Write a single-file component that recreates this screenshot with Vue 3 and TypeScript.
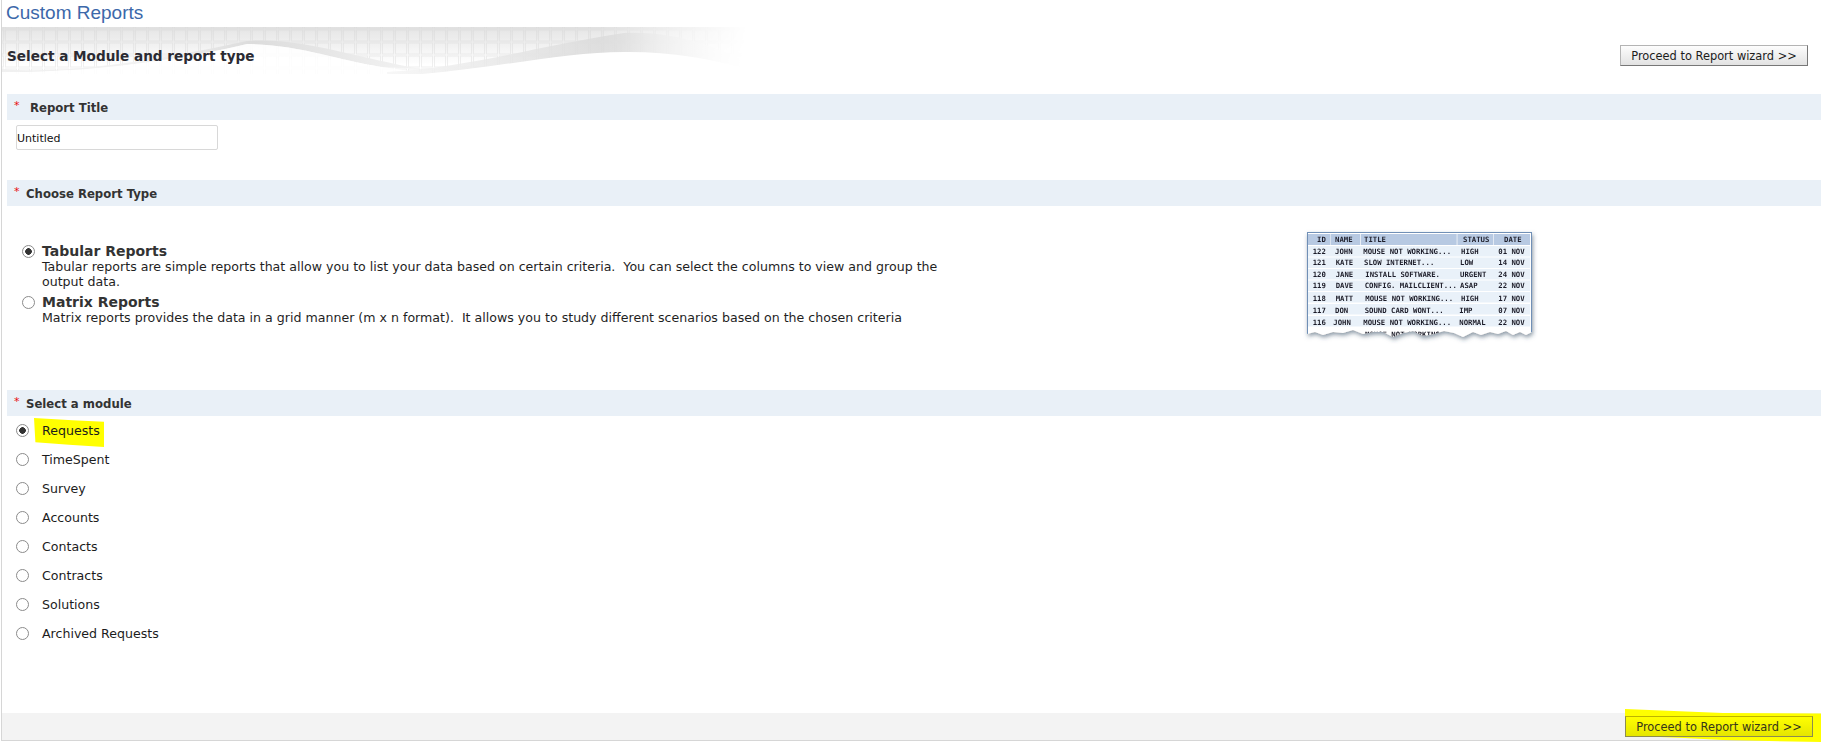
<script setup lang="ts">
import { ref } from 'vue'

interface ReportRow { cells: [string, number][] }

const modules = ['Requests', 'TimeSpent', 'Survey', 'Accounts', 'Contacts', 'Contracts', 'Solutions', 'Archived Requests']
const selectedModule = ref('Requests')
const reportType = ref('tabular')
const title = ref('Untitled')

const columns = [
  { x: 17, w: 22.5 }, { x: 40, w: 29 }, { x: 69.7, w: 96 }, { x: 166.4, w: 36 }, { x: 203, w: 36 }
]
const header: [string, number][] = [['ID', 26], ['NAME', 44], ['TITLE', 73], ['STATUS', 172], ['DATE', 213]]
const rows: ReportRow[] = [
  { cells: [['122', 21.7], ['JOHN', 44], ['MOUSE NOT WORKING...', 72.3], ['HIGH', 170], ['01 NOV', 207.3]] },
  { cells: [['121', 21.7], ['KATE', 44.7], ['SLOW INTERNET...', 73], ['LOW', 169], ['14 NOV', 207.3]] },
  { cells: [['120', 21.7], ['JANE', 44.7], ['INSTALL SOFTWARE.', 74.3], ['URGENT', 169], ['24 NOV', 207.3]] },
  { cells: [['119', 21.7], ['DAVE', 44.7], ['CONFIG. MAILCLIENT...', 73.7], ['ASAP', 169], ['22 NOV', 207.3]] },
  { cells: [['118', 21.7], ['MATT', 44.7], ['MOUSE NOT WORKING...', 74.3], ['HIGH', 170], ['17 NOV', 207.3]] },
  { cells: [['117', 21.7], ['DON', 44], ['SOUND CARD WONT...', 73.7], ['IMP', 168.3], ['07 NOV', 207.3]] },
  { cells: [['116', 21.7], ['JOHN', 42.3], ['MOUSE NOT WORKING...', 72.3], ['NORMAL', 168.3], ['22 NOV', 207.3]] }
]
const rowY = [22, 33.5, 45, 56.5, 69, 81, 93]
const torn = '16,8 241,8 241,108 235,111 229,108 222,111 215,107 207,110 199,108 190,111 182,108 172,113 163,109 153,107 143,110 132,112 122,107 112,109 102,113 92,108 82,108 72,110 62,106 52,109 42,108 32,111 24,108 16,110'
</script>

<template>
  <div class="page">
    <div class="frame">
      <h1 class="title">Custom Reports</h1>

      <div class="banner">
        <svg class="banner-art" width="745" height="47" viewBox="0 0 745 47" aria-hidden="true">
          <defs>
            <linearGradient id="topFade" x1="0" y1="0" x2="0" y2="1">
              <stop offset="0" stop-color="#e0e0e0" />
              <stop offset="0.8" stop-color="#ffffff" />
            </linearGradient>
            <linearGradient id="sideFade" x1="0" y1="0" x2="1" y2="0">
              <stop offset="0" stop-color="#fff" />
              <stop offset="0.8" stop-color="#fff" />
              <stop offset="1" stop-color="#000" />
            </linearGradient>
            <linearGradient id="waveLeft" x1="0" y1="0" x2="1" y2="0">
              <stop offset="0" stop-color="#f0f0f0" />
              <stop offset="0.35" stop-color="#f2f2f2" />
              <stop offset="0.6" stop-color="#dcdcdc" />
              <stop offset="1" stop-color="#f4f4f4" />
            </linearGradient>
            <linearGradient id="wave" x1="0" y1="0" x2="1" y2="0">
              <stop offset="0" stop-color="#f6f6f6" />
              <stop offset="0.65" stop-color="#d8d8d8" />
              <stop offset="1" stop-color="#f6f6f6" />
            </linearGradient>
            <pattern id="cells" width="13" height="13" patternUnits="userSpaceOnUse" x="3" y="2.5">
              <rect x="0.5" y="0.5" width="11" height="11" fill="#ffffff" fill-opacity="0.15" stroke="#d8d8d8" stroke-opacity="0.4" />
            </pattern>
            <mask id="bannerMask">
              <rect width="745" height="47" fill="url(#sideFade)" />
            </mask>
          </defs>
          <g mask="url(#bannerMask)">
            <rect width="745" height="47" fill="url(#topFade)" />
            <rect width="745" height="47" fill="url(#cells)" />
            <path d="M0 42 C70 48 160 32 245 14 C300 10 350 30 420 42 L380 40 C330 32 300 18 245 17 C160 37 70 46 0 45 Z" fill="url(#waveLeft)" />
            <path d="M0 45 C70 46 160 37 245 17 C300 18 330 32 380 40 L430 47 L0 47 Z" fill="#ffffff" fill-opacity="0.85" />
            <path d="M385 45 C470 40 530 20 622 6 C670 4 710 18 745 35 L745 47 L385 47 Z" fill="url(#wave)" fill-opacity="0.85" />
            <path d="M420 47 C500 40 570 24 627 25 C670 25 710 32 745 42 L745 47 Z" fill="#ffffff" />
          </g>
        </svg>
        <h2 class="banner-text">Select a Module and report type</h2>
        <button class="proceed" type="button">Proceed to Report wizard &gt;&gt;</button>
      </div>

      <div class="section-head first"><span class="req req-wide">*</span>Report Title</div>
      <div class="title-row">
        <input v-model="title" class="title-input" type="text" />
      </div>

      <div class="section-head"><span class="req">*</span>Choose Report Type</div>
      <div class="type-row">
        <div class="type-list">
          <label class="type-option">
            <input v-model="reportType" class="radio" type="radio" value="tabular" />
            <span>
              <span class="type-name">Tabular Reports</span>
              <span class="type-desc">Tabular reports are simple reports that allow you to list your data based on certain criteria.&nbsp; You can select the columns to view and group the output data.</span>
            </span>
          </label>
          <label class="type-option">
            <input v-model="reportType" class="radio" type="radio" value="matrix" />
            <span>
              <span class="type-name">Matrix Reports</span>
              <span class="type-desc">Matrix reports provides the data in a grid manner (m x n format).&nbsp; It allows you to study different scenarios based on the chosen criteria</span>
            </span>
          </label>
        </div>
        <svg class="sample" width="260" height="120" viewBox="0 0 260 120" role="img" aria-label="Sample tabular report">
          <defs>
            <clipPath id="tornEdge"><polygon :points="torn" /></clipPath>
            <filter id="sampleShadow" x="-10%" y="-10%" width="120%" height="125%">
              <feDropShadow dx="1" dy="2.5" stdDeviation="2" flood-color="#33475f" flood-opacity="0.55" />
            </filter>
          </defs>
          <g filter="url(#sampleShadow)">
            <g clip-path="url(#tornEdge)">
              <rect x="16" y="8" width="225" height="108" fill="#ffffff" />
              <rect x="16.5" y="8.5" width="224" height="110" fill="none" stroke="#6f8fb6" />
              <g v-for="c in columns" :key="c.x">
                <rect :x="c.x" y="10" :width="c.w" height="11" fill="#b7c9e2" />
              </g>
              <g v-for="y in [22, 33.5, 45, 56.5, 68, 80, 92]" :key="y">
                <rect x="17" :y="y" width="222" height="10.5" fill="#e9f1f9" />
              </g>
              <text v-for="h in header" :key="h[0]" :x="h[1]" y="18" class="px-text">{{ h[0] }}</text>
              <g v-for="(r, i) in rows" :key="i">
                <text v-for="c in r.cells" :key="c[0]" :x="c[1]" :y="rowY[i] + 7.5" class="px-text">{{ c[0] }}</text>
              </g>
              <text x="74" y="113" class="px-text">MOUSE NOT WORKING</text>
            </g>
          </g>
        </svg>
      </div>

      <div class="section-head"><span class="req">*</span>Select a module</div>
      <div class="module-list">
        <label v-for="m in modules" :key="m" class="module-row">
          <input v-model="selectedModule" class="radio" type="radio" :value="m" />
          <span class="module-name" :class="{ marked: m === 'Requests' }"><span class="module-label">{{ m }}</span></span>
        </label>
      </div>

      <div class="footer">
        <span class="marker-wrap">
          <button class="proceed proceed-marked" type="button">Proceed to Report wizard &gt;&gt;</button>
        </span>
      </div>
    </div>
  </div>
</template>

<style>
html, body { margin: 0; background: #fff; }
</style>

<style scoped>
.page {
  width: 1821px;
  height: 756px;
  overflow: hidden;
  font-family: "DejaVu Sans", Verdana, sans-serif;
  font-size: 12.6px;
  color: #1c1c1c;
}
.frame {
  box-sizing: border-box;
  width: 1820px;
  height: 741px;
  margin-left: 1px;
  border-left: 1px solid #d6d6d6;
  border-bottom: 1px solid #d6d6d6;
  display: flex;
  flex-direction: column;
}
.title {
  margin: 0;
  height: 27px;
  padding-left: 4px;
  font: 400 19px/25px "Liberation Sans", Arial, sans-serif;
  color: #3c68aa;
}
.banner {
  position: relative;
  height: 47px;
  display: flex;
  align-items: center;
  justify-content: space-between;
  padding: 10px 13px 0 5px;
  box-sizing: border-box;
}
.banner-art { position: absolute; left: 0; top: 0; }
.banner-text {
  position: relative;
  margin: 0;
  font-size: 13.6px;
  font-weight: 700;
  color: #2b2b33;
}
.proceed {
  position: relative;
  box-sizing: border-box;
  width: 188px;
  height: 21px;
  padding: 0;
  font: 11.4px "DejaVu Sans", Verdana, sans-serif;
  color: #1c1c1c;
  background: linear-gradient(#fdfdfd, #e2e2e2);
  border: 1px solid #b4b4b4;
  border-right-color: #777;
  border-bottom-color: #777;
}
.section-head {
  box-sizing: border-box;
  height: 26px;
  margin-left: 5px;
  padding: 1px 0 0 7px;
  display: flex;
  align-items: center;
  font-size: 11.7px;
  font-weight: 700;
  color: #333;
  background: #e9f0f7;
}
.section-head.first { margin-top: 20px; }
.req {
  color: #e80c0c;
  width: 12px;
  font-size: 11px;
  font-weight: 400;
  margin-top: -4px;
}
.req-wide { width: 16px; }
.title-row { height: 60px; padding: 5px 0 0 14px; box-sizing: border-box; }
.title-input {
  box-sizing: border-box;
  display: block;
  width: 202px;
  height: 25px;
  padding: 1px 0 0;
  font: 11px "DejaVu Sans", Verdana, sans-serif;
  color: #111;
  background: #fff;
  border: 1px solid #d8d8d8;
  border-radius: 2px;
}
.type-row {
  height: 184px;
  display: flex;
  justify-content: space-between;
  position: relative;
}
.type-list {
  width: 945px;
  padding: 37px 0 0 20px;
  box-sizing: border-box;
}
.type-option { display: flex; align-items: flex-start; gap: 7px; line-height: 15px; margin-bottom: 5px; }
.type-name { display: block; font-size: 14px; font-weight: 700; color: #333; line-height: 16px; }
.type-desc { display: block; color: #1f1f1f; }
.type-option .radio { margin-top: 2px; }
.sample { margin: 18px 270px 0 0; flex: none; }
.px-text { font: 700 7.3px "DejaVu Sans Mono", monospace; fill: #1e1e2a; }
.radio {
  appearance: none;
  flex: none;
  box-sizing: border-box;
  width: 13px;
  height: 13px;
  margin: 0;
  border: 1px solid #8b8b8b;
  border-radius: 50%;
  background: #fff;
}
.radio:checked { background: radial-gradient(circle, #333 0 3px, #fff 3.6px); }
.module-list { flex: 1; }
.module-row {
  height: 29px;
  display: flex;
  align-items: center;
  padding-left: 14px;
  gap: 13px;
}
.module-name { position: relative; display: block; }
.module-label { position: relative; }
.marked::before {
  content: "";
  position: absolute;
  left: -8px;
  top: -5px;
  width: 70px;
  height: 29px;
  background: #ffff00;
  clip-path: polygon(0 0, 55% 8%, 100% 13%, 100% 100%, 50% 92%, 2% 84%);
}
.footer {
  height: 27px;
  display: flex;
  justify-content: flex-end;
  align-items: center;
  background: #f3f3f3;
  padding-right: 8px;
}
.marker-wrap { position: relative; display: block; height: 21px; }
.marker-wrap::before {
  content: "";
  position: absolute;
  left: 0;
  top: -7px;
  width: 196px;
  height: 33px;
  background: #ffff00;
  clip-path: polygon(0 0, 50% 12%, 100% 14%, 100% 100%, 50% 94%, 30% 88%, 0 80%);
}
.proceed-marked {
  background: linear-gradient(#ffff00, #e6e600);
  border-color: #bdb400 #8c8c50 #8c8c50 #8c8c50;
  color: #35351a;
}
</style>
